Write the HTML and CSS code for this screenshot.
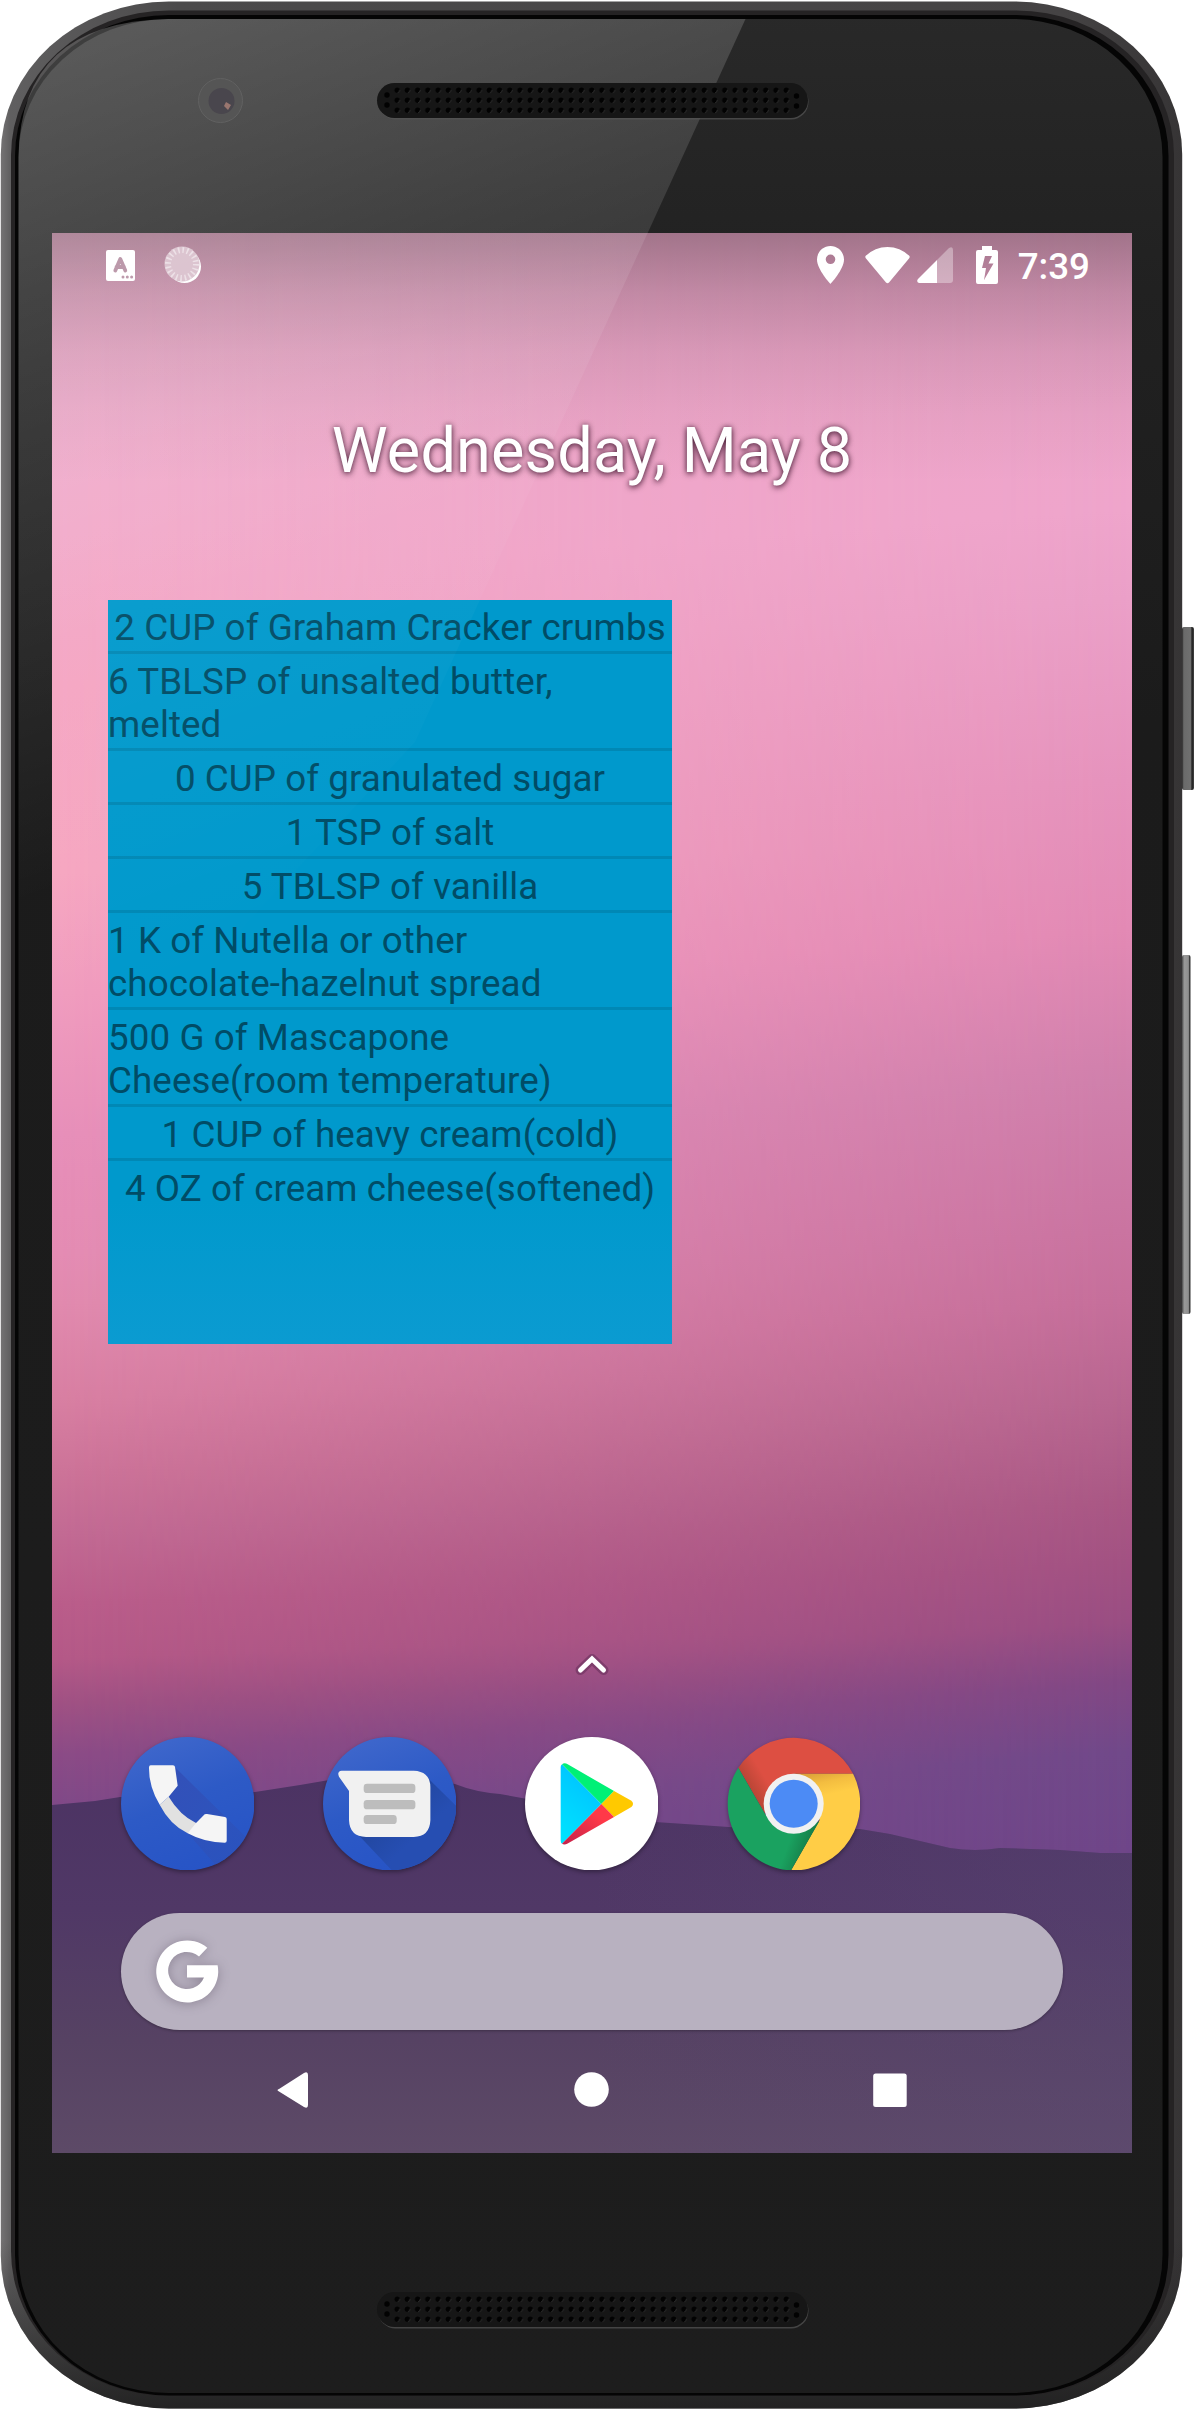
FILE: index.html
```html
<!DOCTYPE html>
<html lang="en">
<head>
<meta charset="utf-8">
<title>Home screen</title>
<link rel="stylesheet" href="styles.css">
</head>
<body>
<div class="phone">
  <svg class="shell" viewBox="0 0 1194 2409" aria-hidden="true">
    <defs>
      <linearGradient id="rim" x1="0" y1="0" x2="1" y2="0">
        <stop offset="0" stop-color="#757374"/><stop offset=".008" stop-color="#605f60"/><stop offset=".15" stop-color="#4b4a4b"/><stop offset=".9" stop-color="#454344"/><stop offset="1" stop-color="#363435"/>
      </linearGradient>
      <linearGradient id="rimfade" x1="0" y1="0" x2="0" y2="1">
        <stop offset=".93" stop-color="#222" stop-opacity="0"/><stop offset="1" stop-color="#1c1c1c" stop-opacity=".85"/>
      </linearGradient>
      <linearGradient id="glass" gradientUnits="userSpaceOnUse" x1="0" y1="0" x2="0" y2="2409">
        <stop offset="0" stop-color="#292929"/><stop offset=".12" stop-color="#212121"/><stop offset=".3" stop-color="#1b1b1b"/><stop offset="1" stop-color="#1d1d1d"/>
      </linearGradient>
      <linearGradient id="shine" gradientUnits="userSpaceOnUse" x1="150" y1="20" x2="420" y2="760">
        <stop offset="0" stop-color="#fff" stop-opacity=".23"/><stop offset=".38" stop-color="#fff" stop-opacity=".13"/><stop offset="1" stop-color="#fff" stop-opacity="0"/>
      </linearGradient>
      <linearGradient id="power" x1="0" y1="0" x2="1" y2="0">
        <stop offset="0" stop-color="#2c2c2c"/><stop offset=".15" stop-color="#6a6a6a"/><stop offset=".75" stop-color="#707070"/><stop offset=".82" stop-color="#1b1b1b"/><stop offset="1" stop-color="#444"/>
      </linearGradient>
      <linearGradient id="volume" x1="0" y1="0" x2="1" y2="0">
        <stop offset="0" stop-color="#555"/><stop offset=".3" stop-color="#999"/><stop offset=".75" stop-color="#8f8f8f"/><stop offset=".9" stop-color="#333"/>
      </linearGradient>
      <pattern id="holes" patternUnits="userSpaceOnUse" x="392" y="85" width="10.24" height="10">
        <circle cx="5.2" cy="5.2" r="2.7" fill="#020202"/><path d="M5.8 7.8q2.2-.8 2-3" stroke="#3a3a3a" stroke-width=".8" fill="none"/>
      </pattern>
      <g id="speaker">
        <rect x="378" y="84.500" width="430.500" height="35" rx="17.500" fill="#555" opacity=".7"/>
        <rect x="377" y="83" width="431" height="35" rx="17.500" fill="#161616"/>
        <rect x="392" y="85" width="399.400" height="30" fill="url(#holes)"/>
        <g fill="#020202"><circle cx="387" cy="95" r="2.700"/><circle cx="387" cy="105" r="2.700"/><circle cx="796.500" cy="96" r="2.700"/><circle cx="796.500" cy="106" r="2.700"/></g>
      </g>
    </defs>
    <rect x="1182" y="627" width="12" height="163" rx="2" fill="url(#power)"/>
    <rect x="1182" y="955" width="8.500" height="359" rx="2" fill="url(#volume)"/>
    <rect x=".8" y="1.500" width="1181.400" height="2407" rx="168" ry="153" fill="url(#rim)"/>
    <rect x=".8" y="1.500" width="1181.400" height="2407" rx="168" ry="153" fill="url(#rimfade)"/>
    <rect x="11" y="10.500" width="1163" height="2385.500" rx="158" ry="145" fill="#252324"/>
    <rect x="15" y="15" width="1153.500" height="2380.500" rx="154" ry="141" fill="#050505"/>
    <rect x="18.500" y="19" width="1144" height="2374" rx="150" ry="138" fill="url(#glass)"/>
    <path d="M168 19H745.500L415 742L18.500 1000V157Q20 22 168 19Z" fill="url(#shine)"/>
    <ellipse cx="220.500" cy="100.500" rx="22" ry="22" fill="#555" stroke="#616161"/>
    <circle cx="221.500" cy="101" r="13" fill="#49464d"/>
    <path d="M226 102l5 3-3 5-4-4z" fill="#99766f"/>
    <use href="#speaker"/>
    <use href="#speaker" y="2209"/>
  </svg>

  <main class="screen">
    <div class="wallpaper">
      <div class="sky sky-right"></div>
      <div class="sky sky-left"></div>
      <svg class="hills" viewBox="52 1760 1080 393" aria-hidden="true">
        <defs>
          <linearGradient id="hill" x1="0" y1="0" x2="0" y2="1">
            <stop offset="0" stop-color="#4c3363"/><stop offset=".35" stop-color="#503866"/><stop offset=".7" stop-color="#564263"/><stop offset="1" stop-color="#5d4a67"/>
          </linearGradient>
          <linearGradient id="hilltint" x1="0" y1="0" x2="1" y2="0">
            <stop offset=".5" stop-color="#5c4878" stop-opacity="0"/><stop offset="1" stop-color="#5c4878" stop-opacity=".35"/>
          </linearGradient>
        </defs>
        <path d="M52 1805L95 1801L120 1797L255 1792L300 1785L335 1779Q410 1774 455 1784Q475 1792 500 1794L655 1822L700 1825L770 1830L860 1829L890 1834L950 1848Q975 1852 1000 1848L1060 1850L1100 1853H1132V2153H52Z" fill="url(#hill)"/>
        <path d="M52 1805L95 1801L120 1797L255 1792L300 1785L335 1779Q410 1774 455 1784Q475 1792 500 1794L655 1822L700 1825L770 1830L860 1829L890 1834L950 1848Q975 1852 1000 1848L1060 1850L1100 1853H1132V2153H52Z" fill="url(#hilltint)"/>
      </svg>
    </div>

    <header class="status">
      <div class="status-left">
        <svg width="29" height="31" viewBox="0 0 29 31"><path fill="#fff" d="M2 0H27Q29 0 29 2V29Q29 31 27 31H2Q0 31 0 29V2Q0 0 2 0Z"/><path d="M9.300 20.500L14.300 9L19.300 20.500M10.500 17H18" fill="none" stroke="#b28a9e" stroke-width="3.800" stroke-linecap="round" stroke-linejoin="round"/><g fill="#b58da1"><circle cx="17" cy="27" r="1.500"/><circle cx="21.300" cy="27" r="1.500"/><circle cx="25.600" cy="27" r="1.500"/></g></svg>
        <svg width="38" height="38" viewBox="0 0 38 38"><circle cx="20.500" cy="20.500" r="16.500" fill="#fff"/><circle cx="18" cy="18" r="17.500" fill="#d7bcc9"/><circle cx="18" cy="18" r="14" fill="none" stroke="#eadce3" stroke-width="6" stroke-dasharray="1.600 2.798"/></svg>
      </div>
      <div class="status-right">
        <svg class="pin" width="27" height="38" viewBox="0 0 27 38"><path fill="#fff" fill-rule="evenodd" d="M13.500 0C6 0 0 6 0 13.500C0 23.500 13.500 38 13.500 38S27 23.500 27 13.500C27 6 21 0 13.500 0ZM13.500 8.500A4.800 4.800 0 1 1 13.500 18.100A4.800 4.800 0 1 1 13.500 8.500Z"/></svg>
        <svg class="wifi" width="45" height="37" viewBox="0 0 45 37"><path fill="#fff" d="M.5 9Q10 0 22.500 0T44.500 9Q45 10.500 44 11.500L24 35.500Q22.500 37 21 35.500L1 11.500Q0 10.500 .5 9Z"/></svg>
        <svg class="signal" width="36" height="36" viewBox="0 0 36 36"><path fill="#fff" fill-opacity=".35" d="M20 13L32 1Q36-1 36 3V33Q36 36 33 36H20Z"/><path fill="#fff" d="M20 13V36H2Q-1 35 1 32Z"/></svg>
        <svg class="battery" width="22" height="38" viewBox="0 0 22 38"><path fill="#fff" fill-rule="evenodd" d="M6 0H16V4H20Q22 4 22 6V36Q22 38 20 38H2Q0 38 0 36V6Q0 4 2 4H6ZM9 10L6 22H10L8 34L17.500 17.500H12.500L16 10Z"/></svg>
        <span class="clock">7:39</span>
      </div>
    </header>

    <h1 class="date">Wednesday, May 8</h1>

    <ul class="widget">
      <li>2 CUP of Graham Cracker crumbs</li>
      <li class="long">6 TBLSP of unsalted butter, melted</li>
      <li>0 CUP of granulated sugar</li>
      <li>1 TSP of salt</li>
      <li>5 TBLSP of vanilla</li>
      <li class="long">1 K of Nutella or other chocolate-hazelnut spread</li>
      <li class="long">500 G of Mascapone Cheese(room temperature)</li>
      <li>1 CUP of heavy cream(cold)</li>
      <li>4 OZ of cream cheese(softened)</li>
    </ul>

    <svg class="drawer-arrow" width="36" height="24" viewBox="0 0 36 24"><path d="M6.500 17L18 6L29.500 17" fill="none" stroke="#6d325f" stroke-opacity=".65" stroke-width="10" stroke-linecap="round" stroke-linejoin="round"/><path d="M6.500 17L18 6L29.500 17" fill="none" stroke="#fff" stroke-width="5" stroke-linecap="round"/></svg>

    <nav class="dock">
      <svg class="app" viewBox="64 291 400 400">
        <defs><linearGradient id="blue" x1=".2" y1="0" x2=".6" y2="1"><stop offset="0" stop-color="#4068cc"/><stop offset=".5" stop-color="#2d5ac6"/><stop offset="1" stop-color="#2754c6"/></linearGradient>
        <clipPath id="disc"><circle cx="264" cy="491" r="200"/></clipPath>
        <linearGradient id="cast" x1="0" y1="0" x2="1" y2="1"><stop offset="0" stop-color="#3350b8"/><stop offset="1" stop-color="#2b52ba" stop-opacity=".6"/></linearGradient></defs>
        <circle cx="264" cy="491" r="200" fill="url(#blue)"/>
        <path clip-path="url(#disc)" d="M226 382L450 602L370 700L264 580L207 470Z" fill="url(#cast)"/>
        <path d="M207 470Q240 525 289 549L300 570L264 580Q210 553 180 494Z" fill="#e1e1e1"/>
        <path d="M153 376H220Q225 376 226 381L234 437L207 470L180 494Q147 440 148 382Q148 376 153 376Z" fill="#f5f5f5"/>
        <path d="M289 549L315 523Q318 521 322 522L376 531Q381 532 381 537V602Q381 608 375 608Q315 608 264 580Z" fill="#f5f5f5"/>
      </svg>
      <svg class="app" viewBox="670 291 400 400">
        <defs><clipPath id="disc2"><circle cx="870" cy="491" r="200"/></clipPath>
        <linearGradient id="cast2" x1="0" y1="0" x2="1" y2="1"><stop offset="0" stop-color="#1d3f8c"/><stop offset=".6" stop-color="#264eb2"/></linearGradient></defs>
        <circle cx="870" cy="491" r="200" fill="url(#blue)"/>
        <path clip-path="url(#disc2)" d="M985 415L1080 508V700H885L770 578Z" fill="url(#cast2)"/>
        <path d="M726 392H942Q992 394 992 442V541Q990 590 942 591H799Q750 590 748 541V453L718 410Q711 394 726 392Z" fill="#f1f1f1"/>
        <g fill="#bdbdbd"><rect x="792" y="431" width="155" height="28" rx="10"/><rect x="792" y="480" width="155" height="28" rx="10"/><rect x="792" y="525" width="99" height="27" rx="10"/></g>
      </svg>
      <svg class="app" viewBox="136 291 400 400">
        <defs><linearGradient id="cyan" x1=".4" y1="0" x2="0" y2="1"><stop offset="0" stop-color="#00c3ff"/><stop offset="1" stop-color="#00e5ff"/></linearGradient>
        <linearGradient id="red" x1="1" y1="0" x2="0" y2="1"><stop offset=".3" stop-color="#ff3948"/><stop offset="1" stop-color="#c4214a"/></linearGradient></defs>
        <circle cx="336" cy="491" r="200" fill="#fff"/>
        <path d="M247 373L365 492L247 611Q243 609 243 602V381Q243 376 247 373Z" fill="url(#cyan)"/>
        <path d="M247 373Q254 367 264 373L403 453L365 492Z" fill="#00f076"/>
        <path d="M403 453L455 482Q465 491 455 501L403 531L365 492Z" fill="#ffc900"/>
        <path d="M365 492L403 531L264 610Q254 616 247 611Z" fill="url(#red)"/>
      </svg>
      <svg class="app" viewBox="742 291 400 400">
        <defs><linearGradient id="ysh" gradientUnits="userSpaceOnUse" x1="1000" y1="401" x2="1015" y2="470"><stop offset="0" stop-color="#dda33a"/><stop offset=".45" stop-color="#f3bd40"/><stop offset="1" stop-color="#ffcd46"/></linearGradient>
        <linearGradient id="gsh" gradientUnits="userSpaceOnUse" x1="985" y1="620" x2="930" y2="600"><stop offset="0" stop-color="#16804a"/><stop offset="1" stop-color="#1aa260"/></linearGradient>
        <linearGradient id="rsh" gradientUnits="userSpaceOnUse" x1="810" y1="450" x2="860" y2="420"><stop offset="0" stop-color="#b84535"/><stop offset="1" stop-color="#dd4f42"/></linearGradient></defs>
        <path d="M776 383A200 200 0 0 1 1120 401H942L855 520Z" fill="url(#rsh)"/>
        <path d="M1120 401A200 200 0 0 1 934 691L1020 540L942 401Z" fill="url(#ysh)"/>
        <path d="M776 383A200 200 0 0 0 934 691L1018 545L942 560L858 525Z" fill="url(#gsh)"/>
        <circle cx="942" cy="491" r="90" fill="#f1f1f1"/><circle cx="942" cy="491" r="72" fill="#4c8bf5"/>
      </svg>
    </nav>

    <div class="search">
      <svg class="g-mark" width="64" height="64" viewBox="-32 -32 64 64"><path fill="#fff" d="M20.300-23.200A31 31 0 1 0 30.600-5.800H0V6.500H17A18.600 18.600 0 1 1 12-14.500Z"/></svg>
    </div>

    <footer class="navbar">
      <svg width="36" height="38" viewBox="0 0 36 38"><path d="M3 18L28 2Q32 0 32 4V34Q32 38 28 36L3 20.500Q0 19 3 18Z" fill="#fff"/></svg>
      <svg width="36" height="36" viewBox="0 0 36 36"><circle cx="17.500" cy="17.500" r="17.300" fill="#fff"/></svg>
      <svg width="36" height="36" viewBox="0 0 36 36"><rect x="1.200" y="1.500" width="33.500" height="33.500" rx="2.500" fill="#fff"/></svg>
    </footer>
    <div class="glare"></div>
  </main>
</div>
</body>
</html>
```
FILE: styles.css
```css
* { box-sizing: border-box; }

body {
  margin: 0;
  background: #fff;
  font-family: Roboto, "Liberation Sans", sans-serif;
}

.phone {
  position: relative;
  width: 1194px;
  height: 2409px;
  padding: 233px 62px 0 52px;
  overflow: hidden;
}

.shell {
  position: absolute;
  inset: 0;
  width: 1194px;
  height: 2409px;
}

svg { display: block; }

.screen {
  position: relative;
  isolation: isolate;
  display: flex;
  flex-direction: column;
  width: 1080px;
  height: 1920px;
  overflow: hidden;
}

.wallpaper {
  position: absolute;
  inset: 0;
  z-index: -1;
}

.sky {
  position: absolute;
  inset: 0;
}

.sky-left {
  background: linear-gradient(178deg,
    #eea6c8 0, #eea8c9 170px, #f1a8c8 300px, #f5a5c2 450px, #f6a6c0 640px,
    #f09cbe 760px, #e78fb9 900px, #e48cb3 1020px, #e18aae 1070px, #d87fa2 1165px,
    #cc7398 1240px, #c26a93 1300px, #ba5d8a 1370px, #b45987 1425px, #9f5183 1470px,
    #8b4b86 1520px, #7a4888 1600px);
  mask-image: linear-gradient(90deg, #000, transparent);
}

.sky-right {
  background: linear-gradient(176deg,
    #eaa2c5 0, #eea5ca 250px, #efa5cc 350px, #eba0c8 440px, #e693bd 620px,
    #e38ab5 770px, #d080ac 920px, #ca74a1 1070px, #c66f9b 1140px, #b86690 1240px,
    #aa5885 1340px, #a35283 1400px, #9a4e83 1460px, #824885 1520px, #71498a 1590px, #6f4689 1690px);
}

.wallpaper::after {
  content: "";
  position: absolute;
  inset: 0;
  background: linear-gradient(rgba(35, 35, 35, .37), rgba(35, 35, 35, .21) 60px, rgba(35, 35, 35, .1) 120px, rgba(35, 35, 35, .04) 180px, transparent 250px);
}

.hills {
  position: absolute;
  left: 0;
  bottom: 0;
  width: 1080px;
  height: 393px;
}

.glare {
  position: absolute;
  inset: 0;
  pointer-events: none;
  background: linear-gradient(160deg, rgba(255, 255, 255, .14), rgba(255, 255, 255, .1) 200px, rgba(255, 255, 255, .04) 380px, rgba(255, 255, 255, .02) 560px, transparent 750px);
  clip-path: polygon(0 0, 595.6px 0, 363px 509px, 0 900px);
}

.status {
  display: flex;
  justify-content: space-between;
  align-items: center;
  height: 63px;
  padding: 1px 42px 0 54px;
}

.status-left {
  display: flex;
  align-items: center;
  gap: 29px;
}

.status-right {
  display: flex;
  align-items: center;
}

.wifi { margin-left: 21px; }
.signal { margin-left: 7px; }
.battery { margin-left: 23px; }

.clock {
  margin-left: 20px;
  color: #fff;
  font-size: 36.75px;
  font-weight: 500;
  line-height: 43px;
  position: relative;
  top: 1px;
}

.date {
  margin: 118px 0 0;
  color: #fff;
  font-size: 63px;
  font-weight: 400;
  letter-spacing: .15px;
  line-height: 74px;
  text-align: center;
  text-shadow: 0 2px 6px rgba(40, 0, 25, .65), 0 0 5px rgba(40, 0, 25, .5);
}

.widget {
  width: 564px;
  height: 744px;
  margin: 112px 0 0 56px;
  padding: 0;
  list-style: none;
  background: linear-gradient(#0099cc 600px, #0b9bd1);
  color: #004c66;
  font-size: 36.75px;
  letter-spacing: .08px;
  line-height: 43px;
}

.widget li {
  padding: 6px 0 2px;
  text-align: center;
  white-space: nowrap;
}

.widget li + li { border-top: 3px solid #0088b5; }

.widget .long {
  padding-right: 60px;
  text-align: left;
  white-space: normal;
}

.drawer-arrow {
  margin: 309px auto 0;
  width: 36px;
}

.dock {
  display: flex;
  gap: 68.6px;
  margin: 60px 0 0 69px;
}

.app {
  width: 133.4px;
  height: 133.4px;
  filter: drop-shadow(0 2px 2px rgba(0, 0, 0, .35));
}

.search {
  display: flex;
  align-items: center;
  width: 942px;
  height: 117px;
  margin: 42.6px 0 0 69px;
  padding-left: 34px;
  border-radius: 59px;
  background: #b8b1c0;
  box-shadow: 0 1px 3px rgba(0, 0, 0, .3);
}

.g-mark { filter: drop-shadow(0 1px 6px rgba(60, 50, 70, .35)); overflow: visible; }

.navbar {
  display: flex;
  justify-content: space-between;
  align-items: center;
  height: 120px;
  padding: 0 224px;
}
```
